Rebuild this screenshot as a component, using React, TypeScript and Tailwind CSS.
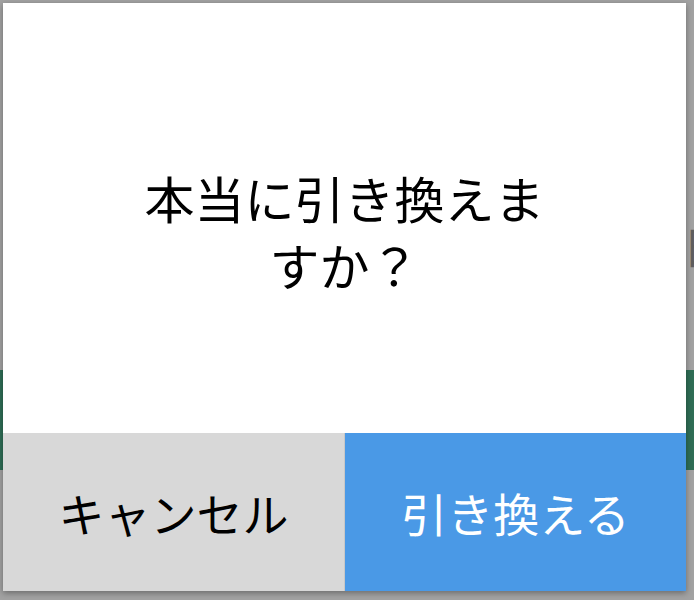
export default function App() {
  return (
    <div
      className="relative w-[694px] h-[600px] overflow-hidden bg-[#a2a2a2]"
      style={{ fontFamily: '"Noto Sans CJK JP", "Noto Sans", sans-serif' }}
    >
      {/* page behind the overlay */}
      <div className="flex flex-col pt-[222px]">
        <div className="flex justify-between h-[46px] text-[44px] leading-[46px] text-[#5e5e5e]">
          <span className="-ml-[38px]">日</span>
          <span className="-mr-[33px]">日</span>
        </div>
        <div className="mt-[102px] h-[100px] bg-[#2f6e56]" />
      </div>

      {/* dialog */}
      <div className="absolute left-[3px] top-[3px] w-[683px] h-[588px] flex flex-col bg-white shadow-[0_2px_6px_rgba(0,0,0,0.35)]">
        <div className="flex-1 flex items-center justify-center px-[140px] pt-[26px]">
          <p className="text-center text-[50px] leading-[67px] text-black">本当に引き換えますか？</p>
        </div>
        <div className="flex h-[158px]">
          <button className="flex-1 flex items-center justify-center bg-[#d8d8d8] border-r border-[#c8c8c8] text-[46px] text-black">
            キャンセル
          </button>
          <button className="flex-1 flex items-center justify-center bg-[#4a99e6] text-[46px] text-white">
            引き換える
          </button>
        </div>
      </div>
    </div>
  );
}
